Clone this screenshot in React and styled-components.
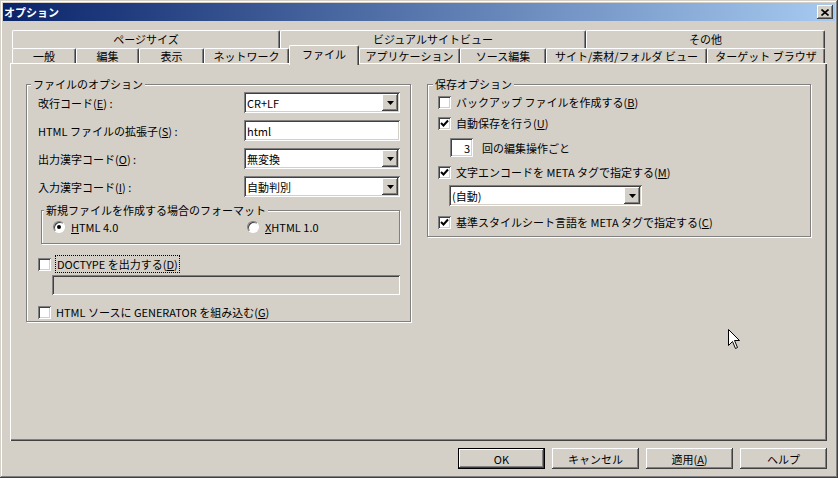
import React from "react";
import styled, { createGlobalStyle } from "styled-components";

const FACE = "#d4d0c8";

const GlobalStyle = createGlobalStyle`
  html, body {
    margin: 0;
    padding: 0;
    background: ${FACE};
  }
  body {
    font-family: "Noto Sans CJK JP", "Liberation Sans", sans-serif;
    font-size: 11px;
    color: #000;
  }
  * {
    box-sizing: border-box;
  }
`;

const raised = `
  box-shadow: inset -1px -1px #404040, inset 1px 1px #fff, inset -2px -2px #808080;
`;

const sunken = `
  box-shadow: inset 1px 1px #808080, inset -1px -1px #fff, inset 2px 2px #404040, inset -2px -2px ${FACE};
`;

const Window = styled.div`
  position: relative;
  width: 838px;
  height: 478px;
  padding: 3px;
  background: ${FACE};
  box-shadow: inset -1px -1px #404040, inset 1px 1px ${FACE}, inset -2px -2px #808080, inset 2px 2px #fff;
  display: flex;
  flex-direction: column;
`;

const TitleBar = styled.div`
  height: 18px;
  display: flex;
  align-items: center;
  justify-content: space-between;
  padding: 0 2px 0 1px;
  background: linear-gradient(to right, #0a246a, #a6caf0);
  color: #fff;
  font-weight: bold;
  font-size: 11px;
`;

const CloseButton = styled.span`
  width: 16px;
  height: 14px;
  background: ${FACE};
  display: flex;
  align-items: center;
  justify-content: center;
  ${raised}
`;

const Body = styled.div`
  padding: 9px 0 0 7px;
`;

const Tabs = styled.div`
  margin-left: 2px;
`;

const TabRow = styled.div`
  display: flex;
  height: ${(p) => p.$h}px;
  align-items: flex-start;
`;

const Tab = styled.div`
  width: ${(p) => p.$w}px;
  height: ${(p) => (p.$active ? p.$h + 5 : p.$h)}px;
  margin-top: ${(p) => (p.$active ? -3 : 0)}px;
  display: flex;
  align-items: center;
  justify-content: center;
  padding-bottom: ${(p) => (p.$active ? 3 : 1)}px;
  background: ${FACE};
  border-top: 1px solid #fff;
  border-left: 1px solid #fff;
  border-right: 1px solid #404040;
  border-radius: 2px 2px 0 0;
  box-shadow: inset -1px 0 #808080;
  position: ${(p) => (p.$active ? "relative" : "static")};
  z-index: ${(p) => (p.$active ? 1 : "auto")};
  white-space: nowrap;
`;

const Panel = styled.div`
  width: 817px;
  height: 378px;
  padding: 14px 16px 0;
  display: grid;
  grid-template-columns: 385px 384px;
  column-gap: 16px;
  align-items: start;
  box-shadow: inset 1px 1px #fff, inset -1px -1px #404040, inset -2px -2px #808080;
`;

const Group = styled.fieldset`
  margin: 0;
  padding: 0;
  min-width: 0;
  border: 1px solid #808080;
  box-shadow: 1px 1px 0 #fff, inset 1px 1px 0 #fff;
`;

const Legend = styled.legend`
  margin-left: ${(p) => p.$indent ?? 4}px;
  padding: 0 2px;
  line-height: 14px;
  background: ${FACE};
`;

const GroupInner = styled.div`
  padding: ${(p) => p.$pad};
  display: flex;
  flex-direction: column;
`;

const FieldGrid = styled.div`
  display: grid;
  grid-template-columns: 206px 156px;
  row-gap: 7px;
  align-items: center;
`;

const Label = styled.span`
  white-space: nowrap;
`;

const Select = styled.div`
  width: ${(p) => p.$w}px;
  height: 21px;
  margin: ${(p) => p.$m || 0};
  padding: 2px 2px 2px 3px;
  background: #fff;
  display: flex;
  align-items: center;
  justify-content: space-between;
  ${sunken}
`;

const DropButton = styled.span`
  width: 16px;
  height: 17px;
  background: ${FACE};
  display: flex;
  align-items: center;
  justify-content: center;
  ${raised}
`;

const TextBox = styled.div`
  width: ${(p) => p.$w}px;
  height: ${(p) => p.$h || 21}px;
  margin: ${(p) => p.$m || 0};
  padding: 2px 3px;
  display: flex;
  align-items: center;
  justify-content: ${(p) => (p.$right ? "flex-end" : "flex-start")};
  background: ${(p) => (p.$disabled ? FACE : "#fff")};
  ${sunken}
`;

const SubGroup = styled(Group)`
  margin: 6px 0 0 3px;
  width: 359px;
`;

const RadioGrid = styled.div`
  display: grid;
  grid-template-columns: 194px 1fr;
  padding: 2px 0 8px 11px;
  height: 16px;
  box-sizing: content-box;
`;

const Option = styled.label`
  display: flex;
  align-items: center;
  gap: ${(p) => p.$gap ?? 5}px;
  height: 16px;
  margin-top: ${(p) => p.$mt || 0}px;
  white-space: nowrap;
`;

const RadioCircle = styled.span`
  width: 12px;
  height: 12px;
  flex: none;
  border-radius: 50%;
  background: #fff;
  border: 1px solid;
  border-color: #808080 #fff #fff #808080;
  box-shadow: inset 1px 1px #404040;
  display: flex;
  align-items: center;
  justify-content: center;
`;

const RadioDot = styled.span`
  width: 4px;
  height: 4px;
  border-radius: 50%;
  background: #000;
`;

const CheckBox = styled.span`
  width: 13px;
  height: 13px;
  flex: none;
  background: #fff;
  display: flex;
  align-items: center;
  justify-content: center;
  ${sunken}
`;

const Focus = styled.span`
  outline: 1px dotted #000;
  outline-offset: 0;
  padding: 0 1px;
`;

const SpinRow = styled.div`
  display: flex;
  align-items: center;
  gap: 9px;
  margin: 7px 0 0 12px;
`;

const ButtonBar = styled.div`
  width: 817px;
  margin-top: 7px;
  display: flex;
  justify-content: flex-end;
  gap: 7px;
`;

const Button = styled.div`
  width: 87px;
  height: 21px;
  display: flex;
  align-items: center;
  justify-content: center;
  background: ${FACE};
  box-shadow: ${(p) =>
    p.$default
      ? "inset 0 0 0 1px #000, inset -2px -2px #404040, inset 2px 2px #fff, inset -3px -3px #808080"
      : "inset -1px -1px #404040, inset 1px 1px #fff, inset -2px -2px #808080"};
`;

const Cursor = styled.svg`
  position: absolute;
  left: 728px;
  top: 329px;
`;

const Arrow = () => (
  <svg width="7" height="4" viewBox="0 0 7 4">
    <polygon points="0,0 7,0 3.5,4" fill="#000" />
  </svg>
);

const Dropdown = ({ w, m, children }) => (
  <Select $w={w} $m={m}>
    <span>{children}</span>
    <DropButton>
      <Arrow />
    </DropButton>
  </Select>
);

const Check = ({ checked, mt, children }) => (
  <Option $mt={mt}>
    <CheckBox>
      {checked && (
        <svg width="9" height="9" viewBox="0 0 9 9">
          <polyline points="1,4 3.5,6.5 8,1.5" fill="none" stroke="#000" strokeWidth="2" />
        </svg>
      )}
    </CheckBox>
    <span>{children}</span>
  </Option>
);

const Radio = ({ checked, children }) => (
  <Option $gap={6}>
    <RadioCircle>{checked && <RadioDot />}</RadioCircle>
    <span>{children}</span>
  </Option>
);

const backTabs = [
  ["ページサイズ", 268],
  ["ビジュアルサイトビュー", 306],
  ["その他", 239],
];

const frontTabs = [
  ["一般", 64],
  ["編集", 63],
  ["表示", 65],
  ["ネットワーク", 85],
  ["ファイル", 70, true],
  ["アプリケーション", 101],
  ["ソース編集", 86],
  ["サイト/素材/フォルダ ビュー", 161],
  ["ターゲット ブラウザ", 118],
];

export default function App() {
  return (
    <>
      <GlobalStyle />
      <Window>
        <TitleBar>
          <span>オプション</span>
          <CloseButton>
            <svg width="8" height="7" viewBox="0 0 8 7">
              <path d="M0.5 0.5 L7.5 6.5 M7.5 0.5 L0.5 6.5" stroke="#000" strokeWidth="1.6" />
            </svg>
          </CloseButton>
        </TitleBar>
        <Body>
          <Tabs>
            <TabRow $h={18}>
              {backTabs.map(([t, w]) => (
                <Tab key={t} $w={w} $h={18}>
                  {t}
                </Tab>
              ))}
            </TabRow>
            <TabRow $h={15}>
              {frontTabs.map(([t, w, active]) => (
                <Tab key={t} $w={w} $h={15} $active={active}>
                  {t}
                </Tab>
              ))}
            </TabRow>
          </Tabs>
          <Panel>
            <Group>
              <Legend>ファイルのオプション</Legend>
              <GroupInner $pad="1px 9px 1px 11px">
                <FieldGrid>
                  <Label>
                    改行コード(<u>E</u>) :
                  </Label>
                  <Dropdown w={156}>CR+LF</Dropdown>
                  <Label>
                    HTML ファイルの拡張子(<u>S</u>) :
                  </Label>
                  <TextBox $w={156}>html</TextBox>
                  <Label>
                    出力漢字コード(<u>O</u>) :
                  </Label>
                  <Dropdown w={156}>無変換</Dropdown>
                  <Label>
                    入力漢字コード(<u>I</u>) :
                  </Label>
                  <Dropdown w={156}>自動判別</Dropdown>
                </FieldGrid>
                <SubGroup>
                  <Legend $indent={2}>新規ファイルを作成する場合のフォーマット</Legend>
                  <RadioGrid>
                    <Radio checked>
                      <u>H</u>TML 4.0
                    </Radio>
                    <Radio>
                      <u>X</u>HTML 1.0
                    </Radio>
                  </RadioGrid>
                </SubGroup>
                <Check mt={12}>
                  <Focus>
                    DOCTYPE を出力する(<u>D</u>)
                  </Focus>
                </Check>
                <TextBox $w={348} $h={20} $m="3px 0 0 14px" $disabled />
                <Check mt={9}>
                  HTML ソースに GENERATOR を組み込む(<u>G</u>)
                </Check>
              </GroupInner>
            </Group>
            <Group>
              <Legend $indent={5}>保存オプション</Legend>
              <GroupInner $pad="3px 10px 6px 10px">
                <Check>
                  バックアップ ファイルを作成する(<u>B</u>)
                </Check>
                <Check checked mt={5}>
                  自動保存を行う(<u>U</u>)
                </Check>
                <SpinRow>
                  <TextBox $w={23} $h={19} $right>
                    3
                  </TextBox>
                  <span>回の編集操作ごと</span>
                </SpinRow>
                <Check checked mt={7}>
                  文字エンコードを META タグで指定する(<u>M</u>)
                </Check>
                <Dropdown w={193} m="5px 0 0 11px">
                  (自動)
                </Dropdown>
                <Check checked mt={8}>
                  基準スタイルシート言語を META タグで指定する(<u>C</u>)
                </Check>
              </GroupInner>
            </Group>
          </Panel>
          <ButtonBar>
            <Button $default>OK</Button>
            <Button>キャンセル</Button>
            <Button>
              適用(<u>A</u>)
            </Button>
            <Button>ヘルプ</Button>
          </ButtonBar>
        </Body>
        <Cursor width="13" height="21" viewBox="0 0 13 21">
          <path
            d="M0.5 0.5 L0.5 16.5 L4.5 12.5 L7.5 19.5 L9.5 18.5 L6.5 11.5 L11.5 11.5 Z"
            fill="#fff"
            stroke="#000"
            strokeWidth="1"
          />
        </Cursor>
      </Window>
    </>
  );
}
